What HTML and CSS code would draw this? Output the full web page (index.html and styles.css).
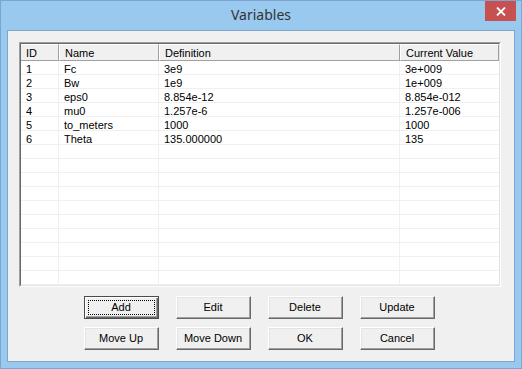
FILE: index.html
```html
<!DOCTYPE html>
<html>
<head>
<meta charset="utf-8">
<link rel="stylesheet" href="styles.css">
</head>
<body>
<div class="window">
  <div class="titlebar">
    <div class="title">Variables</div>
    <div class="close">
      <svg width="10" height="9" viewBox="0 0 10 9"><path d="M1 0.5 L9 8.5 M9 0.5 L1 8.5" stroke="#fff" stroke-width="1.8"/></svg>
    </div>
  </div>
  <div class="client">
    <div class="list">
      <div class="list-inner">
        <div class="header">
          <div class="hcell">ID</div>
          <div class="hcell">Name</div>
          <div class="hcell">Definition</div>
          <div class="hcell">Current Value</div>
        </div>
        <div class="rows">
          <div class="row"><div class="cell">1</div><div class="cell">Fc</div><div class="cell">3e9</div><div class="cell">3e+009</div></div>
          <div class="row"><div class="cell">2</div><div class="cell">Bw</div><div class="cell">1e9</div><div class="cell">1e+009</div></div>
          <div class="row"><div class="cell">3</div><div class="cell">eps0</div><div class="cell">8.854e-12</div><div class="cell">8.854e-012</div></div>
          <div class="row"><div class="cell">4</div><div class="cell">mu0</div><div class="cell">1.257e-6</div><div class="cell">1.257e-006</div></div>
          <div class="row"><div class="cell">5</div><div class="cell">to_meters</div><div class="cell">1000</div><div class="cell">1000</div></div>
          <div class="row"><div class="cell">6</div><div class="cell">Theta</div><div class="cell">135.000000</div><div class="cell">135</div></div>
          <div class="row"><div class="cell"></div><div class="cell"></div><div class="cell"></div><div class="cell"></div></div>
          <div class="row"><div class="cell"></div><div class="cell"></div><div class="cell"></div><div class="cell"></div></div>
          <div class="row"><div class="cell"></div><div class="cell"></div><div class="cell"></div><div class="cell"></div></div>
          <div class="row"><div class="cell"></div><div class="cell"></div><div class="cell"></div><div class="cell"></div></div>
          <div class="row"><div class="cell"></div><div class="cell"></div><div class="cell"></div><div class="cell"></div></div>
          <div class="row"><div class="cell"></div><div class="cell"></div><div class="cell"></div><div class="cell"></div></div>
          <div class="row"><div class="cell"></div><div class="cell"></div><div class="cell"></div><div class="cell"></div></div>
          <div class="row"><div class="cell"></div><div class="cell"></div><div class="cell"></div><div class="cell"></div></div>
          <div class="row"><div class="cell"></div><div class="cell"></div><div class="cell"></div><div class="cell"></div></div>
          <div class="row"><div class="cell"></div><div class="cell"></div><div class="cell"></div><div class="cell"></div></div>
        </div>
      </div>
    </div>
    <div class="buttons">
      <button class="btn default"><span class="focus">Add</span></button>
      <button class="btn">Edit</button>
      <button class="btn">Delete</button>
      <button class="btn">Update</button>
      <button class="btn">Move Up</button>
      <button class="btn">Move Down</button>
      <button class="btn">OK</button>
      <button class="btn">Cancel</button>
    </div>
  </div>
</div>
</body>
</html>
```
FILE: styles.css
```css
* { box-sizing: border-box; }
html, body { margin: 0; padding: 0; }
body {
  width: 522px;
  height: 369px;
  overflow: hidden;
  font-family: "Liberation Sans", Arial, sans-serif;
  font-size: 11px;
  color: #000;
}
.window {
  width: 522px;
  height: 369px;
  background: #99c9ef;
  border: 1px solid #7ba6d2;
  display: flex;
  flex-direction: column;
  padding: 0 6px 6px 6px;
}
.titlebar {
  height: 29px;
  display: flex;
  justify-content: center;
  position: relative;
}
.title {
  font-family: "Noto Sans", "Open Sans", sans-serif;
  font-size: 14px;
  color: #333;
  padding-top: 4px;
  line-height: 20px;
}
.close {
  position: absolute;
  right: -1px;
  top: 0;
  width: 31px;
  height: 20px;
  background: #c75050;
  display: flex;
  align-items: center;
  justify-content: center;
}
.close svg { display: block; }
.client {
  flex: 1;
  background: #f0f0f0;
  border: 1px solid #80a5cc;
  padding: 11px 13px 0 11px;
}
.list {
  height: 245px;
  border-style: solid;
  border-width: 1px;
  border-color: #a0a0a0 #ffffff #ffffff #a0a0a0;
}
.list-inner {
  height: 100%;
  border-style: solid;
  border-width: 1px;
  border-color: #696969 #e3e3e3 #e3e3e3 #696969;
  background: #fff;
  overflow: hidden;
}
.header {
  display: grid;
  grid-template-columns: 38px 100px 241px 99px;
  height: 17px;
  background: #f0f0f0;
}
.hcell {
  padding: 2px 0 0 5px;
  line-height: 13px;
  border-top: 1px solid #fff;
  border-left: 1px solid #fff;
  border-right: 1px solid #a0a0a0;
  border-bottom: 1px solid #a0a0a0;
  box-shadow: 1px 0 0 #696969;
  white-space: nowrap;
  overflow: hidden;
}
.hcell:first-child { border-left: 0; padding-left: 5px; }
.rows { display: flex; flex-direction: column; }
.row {
  display: grid;
  grid-template-columns: 38px 100px 241px 99px;
  height: 14px;
  border-bottom: 1px solid #f0f0f0;
}
.cell {
  padding: 2px 0 0 5px;
  line-height: 13px;
  border-right: 1px solid #f0f0f0;
  white-space: nowrap;
}
.cell:last-child { border-right: 0; }
.buttons {
  margin-top: 9px;
  display: grid;
  grid-template-columns: repeat(4, 75px);
  column-gap: 17px;
  row-gap: 8px;
  justify-content: center;
  margin-left: -2px;
}
.btn {
  width: 75px;
  height: 23px;
  font-family: "Liberation Sans", Arial, sans-serif;
  font-size: 11px;
  color: #000;
  background: #f0f0f0;
  border-style: solid;
  border-width: 1px;
  border-color: #fff #696969 #696969 #fff;
  box-shadow: inset -1px -1px 0 #a0a0a0, inset 1px 1px 0 #e3e3e3;
  padding: 0;
  margin: 0;
  display: flex;
  align-items: center;
  justify-content: center;
  line-height: 13px;
}
.btn.default {
  border: 1px solid #4a4a4a;
  box-shadow: inset 1px 1px 0 #fff, inset -1px -1px 0 #696969, inset -2px -2px 0 #a0a0a0;
  padding: 3px;
}
.focus {
  display: flex;
  align-items: center;
  justify-content: center;
  width: 100%;
  height: 100%;
  border: 1px dotted #000;
}
```
